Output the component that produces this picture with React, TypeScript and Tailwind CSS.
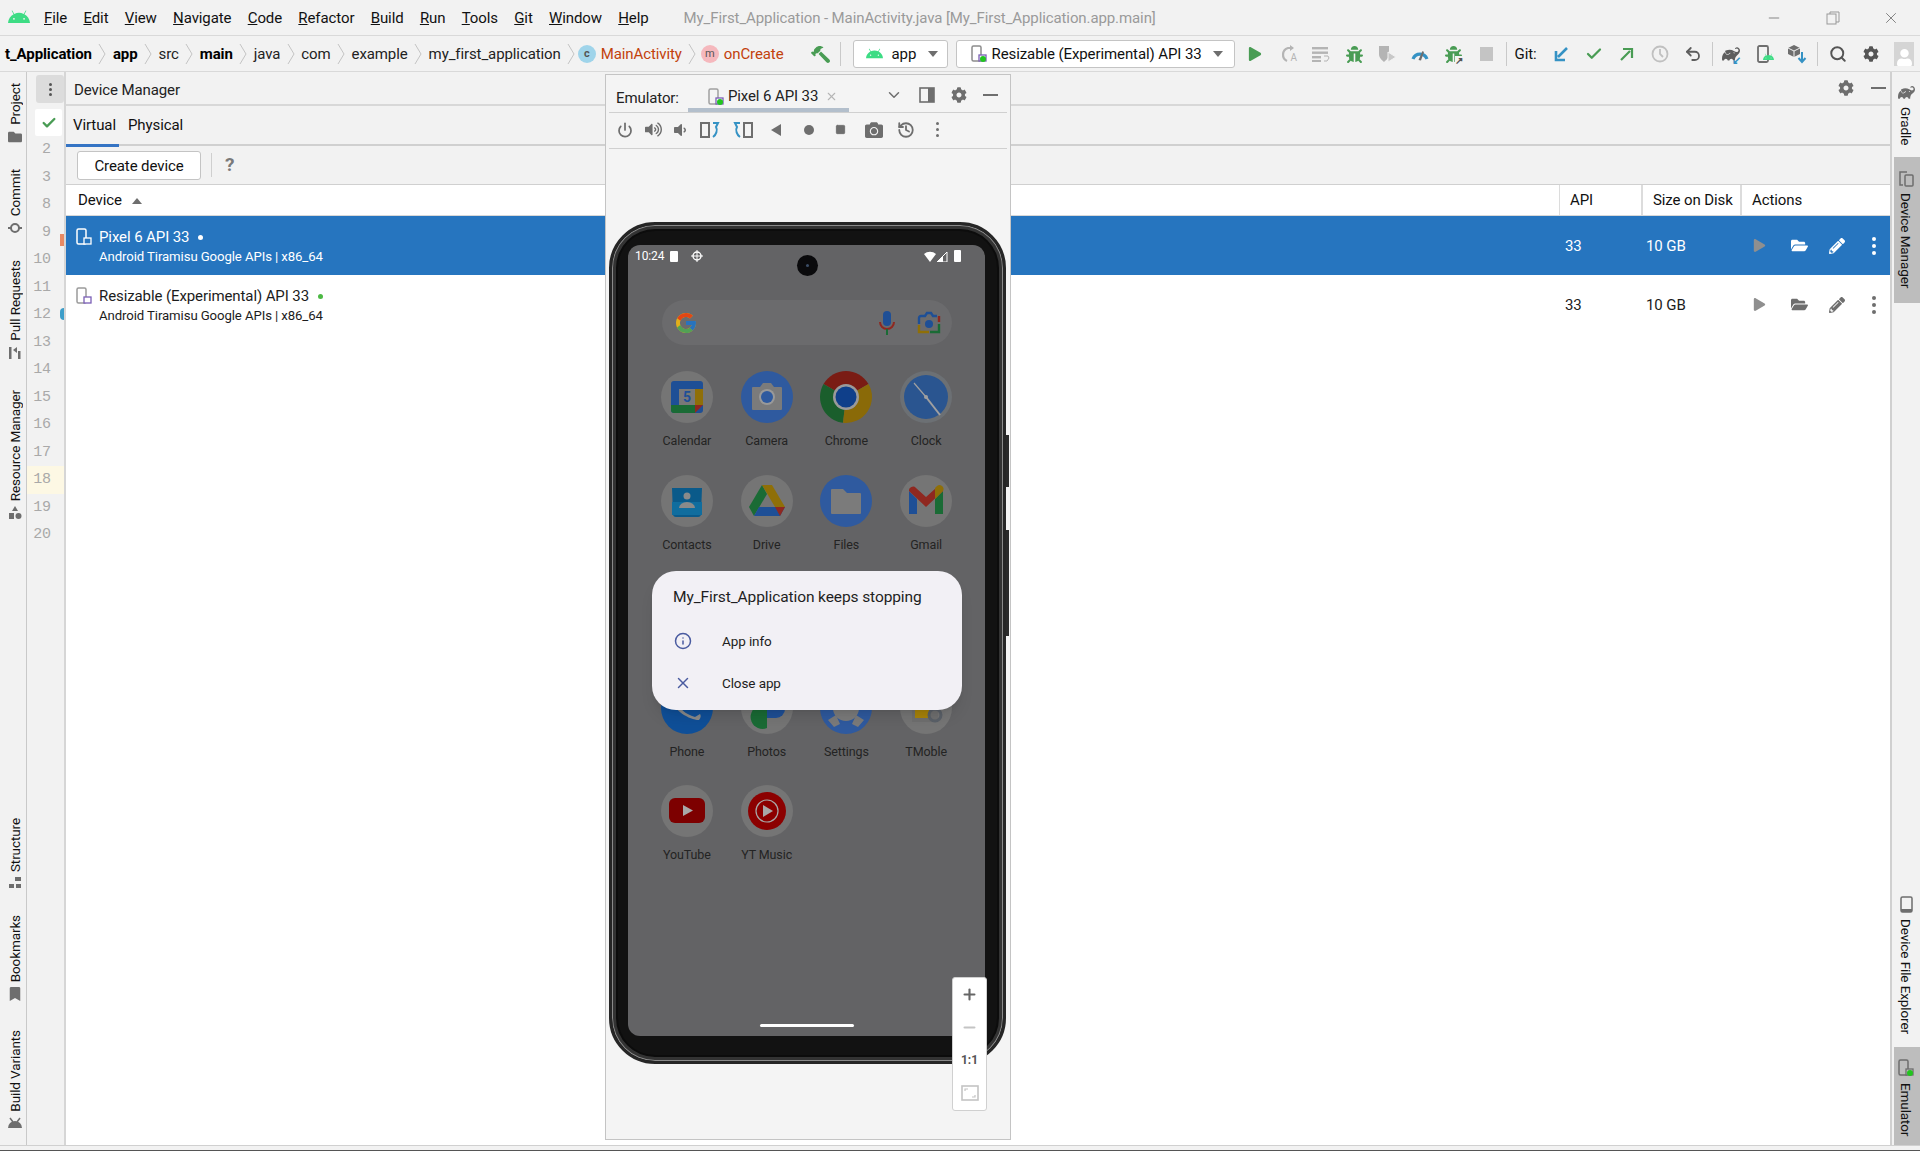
import { Check, ChevronDown, History, Info, Minus, Plus, Power, Search, Square, Undo2, X } from 'lucide-react';
import {
  FaAndroid,
  FaBookmark,
  FaBug,
  FaCamera,
  FaCog,
  FaFolder,
  FaFolderOpen,
  FaHammer,
  FaPencilAlt,
  FaPlay,
  FaUser,
  FaVolumeDown,
  FaVolumeUp,
} from 'react-icons/fa';
import { FcGoogle } from 'react-icons/fc';
import { SiGradle } from 'react-icons/si';
import type { ReactNode } from 'react';

const menus = [
  ['F', 'ile'],
  ['E', 'dit'],
  ['V', 'iew'],
  ['N', 'avigate'],
  ['C', 'ode'],
  ['R', 'efactor'],
  ['B', 'uild'],
  ['R', 'un'],
  ['T', 'ools'],
  ['G', 'it'],
  ['W', 'indow'],
  ['H', 'elp'],
];

const lineNumbers = ['2', '3', '8', '9', '10', '11', '12', '13', '14', '15', '16', '17', '18', '19', '20'];

function Crumb({ label, bold }: { label: string; bold?: boolean }) {
  return (
    <div className="flex items-center">
      <span className={bold ? 'font-bold text-black' : 'text-[#222]'}>{label}</span>
      <CrumbArrow />
    </div>
  );
}

function CrumbArrow() {
  return (
    <svg width="8" height="22" viewBox="0 0 8 22" className="mx-[6.5px] shrink-0">
      <polyline points="1,1 7,11 1,21" fill="none" stroke="#c4c4c4" strokeWidth="1" />
    </svg>
  );
}

function Separator() {
  return <div className="w-px h-[24px] bg-[#c9c9c9] shrink-0" />;
}

function DeviceGlyph({
  accent,
  dot,
  color = '#8c8c8c',
  fill = 'white',
}: {
  accent: string;
  dot?: boolean;
  color?: string;
  fill?: string;
}) {
  return (
    <svg width="16" height="18" viewBox="0 0 16 18" className="shrink-0">
      <rect x="1" y="1" width="9" height="15" rx="1.5" fill="none" stroke={color} strokeWidth="1.5" />
      <rect x="8" y="10" width="7" height="6" fill={fill} stroke={accent} strokeWidth="1.3" />
      {dot && <circle cx="12" cy="14" r="3" fill="#22c41f" />}
    </svg>
  );
}

function Cell({ children }: { children: ReactNode }) {
  return <div className="w-[33px] h-full flex items-center justify-center shrink-0">{children}</div>;
}

function TopToolbarIcons() {
  return (
    <div className="flex items-center h-full">
      <Cell>
        <FaPlay size={14} color="#499c54" />
      </Cell>
      <Cell>
        <div className="relative w-[18px] h-[18px]">
          <svg width="18" height="18" viewBox="0 0 18 18" fill="none">
            <path d="M8 16A7 7 0 0 1 9 3h5" stroke="#b4b4b4" strokeWidth="2.2" />
            <path d="M11 0l4 3-4 3z" fill="#b4b4b4" />
          </svg>
          <span className="absolute right-0 bottom-0 text-[10px] leading-[10px] text-[#b4b4b4]">A</span>
        </div>
      </Cell>
      <Cell>
        <svg width="18" height="16" viewBox="0 0 18 16" fill="#b4b4b4">
          <rect x="0" y="1" width="16" height="2.4" />
          <rect x="0" y="5.5" width="16" height="2.4" />
          <rect x="0" y="10" width="9" height="2.4" />
          <rect x="0" y="14" width="9" height="2" />
          <path d="M12 10h4l1 2-2 3h-3" fill="none" stroke="#b4b4b4" />
        </svg>
      </Cell>
      <Cell>
        <FaBug size={17} color="#499c54" />
      </Cell>
      <Cell>
        <svg width="20" height="20" viewBox="0 0 20 20">
          <path d="M2 2h10v8c0 4-3 6-5 8-2-2-5-4-5-8z" fill="#b4b4b4" />
          <path d="M11 8l8 5-8 5z" fill="#c8c8c8" stroke="#f2f2f2" />
        </svg>
      </Cell>
      <Cell>
        <svg width="18" height="15" viewBox="0 0 18 15">
          <path d="M2 15a7.5 7.5 0 0 1 14 0" fill="none" stroke="#3592c4" strokeWidth="3.2" transform="translate(0 -3)" />
          <path d="M7.5 13l4-9 1.5 1-3 8.5z" fill="#6e6e6e" />
        </svg>
      </Cell>
      <Cell>
        <div className="relative">
          <FaBug size={17} color="#499c54" />
          <div className="absolute -right-[3px] -bottom-[3px] w-[10px] h-[10px] bg-[#f2f2f2] text-[10px] leading-[10px] font-bold text-[#555]">↗</div>
        </div>
      </Cell>
      <Cell>
        <div className="w-[13px] h-[14px] bg-[#c4c4c4]" />
      </Cell>
      <div className="mx-[3px]">
        <Separator />
      </div>
      <span className="ml-[5px] mr-[8px] text-[#111]">Git:</span>
      <Cell>
        <svg width="16" height="16" viewBox="0 0 16 16">
          <path d="M14 2 5 11M3 5v9h9" fill="none" stroke="#3592c4" strokeWidth="2.6" />
        </svg>
      </Cell>
      <Cell>
        <Check size={18} strokeWidth={3} color="#499c54" />
      </Cell>
      <Cell>
        <svg width="16" height="16" viewBox="0 0 16 16">
          <path d="M2 14 11 5M4 3h9v9" fill="none" stroke="#499c54" strokeWidth="2.2" />
        </svg>
      </Cell>
      <Cell>
        <svg width="18" height="18" viewBox="0 0 18 18" fill="none" stroke="#c0c0c0" strokeWidth="1.8">
          <circle cx="9" cy="9" r="7.5" />
          <path d="M9 4v5l3 3" />
        </svg>
      </Cell>
      <Cell>
        <Undo2 size={18} strokeWidth={2.4} color="#5e5e5e" />
      </Cell>
      <div className="mx-[2px]">
        <Separator />
      </div>
      <Cell>
        <div className="relative">
          <SiGradle size={18} color="#5e5e5e" />
          <div className="absolute -right-[1px] -bottom-[3px] text-[11px] leading-[11px] font-bold text-[#3592c4]">↙</div>
        </div>
      </Cell>
      <Cell>
        <div className="relative">
          <svg width="14" height="18" viewBox="0 0 14 18">
            <rect x="1" y="1" width="10" height="16" rx="1.5" fill="none" stroke="#6e6e6e" strokeWidth="1.8" />
          </svg>
          <FaAndroid size={11} color="#3ddc84" className="absolute -right-[3px] bottom-0" />
        </div>
      </Cell>
      <Cell>
        <svg width="20" height="20" viewBox="0 0 20 20">
          <path d="M7 1l6 3v6l-6 3-6-3V4z" fill="#6e6e6e" />
          <path d="M7 7v6M1 4l6 3 6-3" stroke="#f2f2f2" fill="none" />
          <path d="M15 8v9M11.5 14l3.5 4 3.5-4" fill="none" stroke="#3592c4" strokeWidth="2" />
        </svg>
      </Cell>
      <div className="ml-[3px] mr-[4px]">
        <Separator />
      </div>
      <Cell>
        <Search size={18} strokeWidth={2.6} color="#555" />
      </Cell>
      <Cell>
        <FaCog size={16} color="#555" />
      </Cell>
      <Cell>
        <div className="w-[20px] h-[24px] bg-[#d5d5d5] flex items-end justify-center overflow-hidden">
          <FaUser size={17} color="#fff" />
        </div>
      </Cell>
    </div>
  );
}

function SideTab({ label, icon, className = '' }: { label: string; icon: ReactNode; className?: string }) {
  return (
    <div className={`flex flex-col items-center gap-[5px] ${className}`}>
      <span className="[writing-mode:vertical-rl] rotate-180 text-[13.5px] leading-[16px] text-[#111] whitespace-nowrap">{label}</span>
      {icon}
    </div>
  );
}

function RightTab({ label, icon, active, className = '' }: { label: string; icon: ReactNode; active?: boolean; className?: string }) {
  return (
    <div className={`flex flex-col items-center gap-[6px] py-[14px] ${active ? 'bg-[#bdbdbd]' : ''} ${className}`}>
      {icon}
      <span className="[writing-mode:vertical-rl] text-[13.5px] leading-[16px] text-[#111] whitespace-nowrap">{label}</span>
    </div>
  );
}

function LeftStrip() {
  return (
    <div className="w-[27px] shrink-0 border-r border-[#c9c9c9] flex flex-col justify-between pt-[11px] pb-[16px] pl-[3px]">
      <div className="flex flex-col items-center">
        <SideTab label="Project" icon={<FaFolder size={14} color="#6e6e6e" />} />
        <SideTab
          label="Commit"
          className="mt-[25px]"
          icon={
            <svg width="14" height="14" viewBox="0 0 14 14">
              <circle cx="7" cy="7" r="4" fill="none" stroke="#6e6e6e" strokeWidth="2" />
              <path d="M0 7h3M11 7h3" stroke="#6e6e6e" strokeWidth="2" />
            </svg>
          }
        />
        <SideTab
          label="Pull Requests"
          className="mt-[25px]"
          icon={
            <svg width="14" height="14" viewBox="0 0 14 14" fill="#6e6e6e">
              <rect x="1" y="1" width="2.5" height="12" />
              <rect x="10" y="5" width="2.5" height="8" />
              <path d="M9 1v6L5 4z" />
            </svg>
          }
        />
        <SideTab
          label="Resource Manager"
          className="mt-[30px]"
          icon={
            <svg width="14" height="14" viewBox="0 0 14 14" fill="#6e6e6e">
              <path d="M7 0l3 5H4z" />
              <rect x="1" y="7" width="5" height="6" />
              <circle cx="10.5" cy="10" r="3" />
            </svg>
          }
        />
      </div>
      <div className="flex flex-col items-center">
        <SideTab
          label="Structure"
          icon={
            <svg width="14" height="12" viewBox="0 0 14 12" fill="#6e6e6e">
              <rect x="7" y="0" width="6" height="4" />
              <rect x="1" y="7" width="5" height="4" />
              <rect x="8" y="7" width="5" height="4" />
            </svg>
          }
        />
        <SideTab label="Bookmarks" className="mt-[26px]" icon={<FaBookmark size={14} color="#6e6e6e" />} />
        <SideTab
          label="Build Variants"
          className="mt-[29px]"
          icon={
            <svg width="16" height="12" viewBox="0 0 16 12" fill="#6e6e6e">
              <path d="M1 11a7 7 0 0 1 14 0z" />
              <path d="M3 1l3 4M13 1l-3 4" stroke="#6e6e6e" strokeWidth="1.5" />
            </svg>
          }
        />
      </div>
    </div>
  );
}

function Gutter() {
  return (
    <div className="w-[39px] shrink-0 border-r-[2px] border-[#d6d6d6] relative pt-[3px] flex flex-col">
      <div className="ml-[9px] w-[28px] h-[28px] rounded-[3px] bg-[#dcdcdc] flex flex-col items-center justify-center gap-[2px]">
        <div className="w-[3px] h-[3px] rounded-full bg-[#555]" />
        <div className="w-[3px] h-[3px] rounded-full bg-[#555]" />
        <div className="w-[3px] h-[3px] rounded-full bg-[#555]" />
      </div>
      <div className="ml-[8px] mt-[6px] w-[27px] h-[27px] rounded-[2px] bg-white flex items-center justify-center">
        <Check size={16} strokeWidth={3.5} color="#499c54" />
      </div>
      <div className="flex flex-col">
        {lineNumbers.map((n) => (
          <div
            key={n}
            className={`h-[27.5px] leading-[27.5px] pr-[13px] text-right [font-family:'Liberation_Mono',monospace] text-[15px] text-[#a9a9a9] ${
              n === '18' ? 'bg-[#fdf8e4]' : ''
            }`}
          >
            {n}
          </div>
        ))}
      </div>
      <div className="absolute right-0 top-[162px] w-[4px] h-[12px] bg-[#e98a63]" />
      <div className="absolute right-0 top-[236px] w-[4px] h-[12px] rounded-l-full bg-[#3d9ec9]" />
    </div>
  );
}

function DeviceRow({
  name,
  accent,
  selected,
  dot,
}: {
  name: string;
  accent: string;
  selected?: boolean;
  dot: string;
}) {
  const fg = selected ? 'text-white' : 'text-[#1c1c1c]';
  const iconColor = selected ? '#ffffff' : '#6e6e6e';
  const dotClass = selected ? 'bg-white' : 'bg-[#6e6e6e]';
  return (
    <div className={`flex h-[59px] items-center ${selected ? 'bg-[#2675bf]' : 'bg-white'} ${fg}`}>
      <div className="flex-1 flex pl-[10px]">
        <div className="pt-[2px]">
          <DeviceGlyph accent={accent} color={selected ? '#ffffff' : '#9a9a9a'} fill={selected ? '#2675bf' : 'white'} />
        </div>
        <div className="ml-[7px]">
          <div className={`flex items-center h-[22px] text-[15px] ${selected ? 'pt-[2px]' : 'pt-[1px]'}`}>
            {name}
            <div className={`ml-[9px] w-[5px] h-[5px] rounded-full ${dot}`} />
          </div>
          <div className="h-[18px] leading-[18px] text-[13.2px]">Android Tiramisu Google APIs | x86_64</div>
        </div>
      </div>
      <div className="w-[82px] pl-[6px] pt-[1px]">33</div>
      <div className="w-[99px] pl-[5px] pt-[1px]">10 GB</div>
      <div className="w-[150px] flex items-center pl-[13px]">
        <div className="w-[38px]">
          <FaPlay size={13} color="#8f8f8f" />
        </div>
        <div className="w-[38px]">
          <FaFolderOpen size={17} color={iconColor} />
        </div>
        <div className="w-[43px]">
          <FaPencilAlt size={16} color={iconColor} />
        </div>
        <div className="flex flex-col gap-[3px]">
          <div className={`w-[4px] h-[4px] rounded-full ${dotClass}`} />
          <div className={`w-[4px] h-[4px] rounded-full ${dotClass}`} />
          <div className={`w-[4px] h-[4px] rounded-full ${dotClass}`} />
        </div>
      </div>
    </div>
  );
}

function DeviceManager() {
  return (
    <div className="flex-1 flex flex-col min-w-0 border-r-[2px] border-[#d0d0d0]">
      <div className="h-[34px] shrink-0 border-b-[2px] border-[#d8d8d8] flex items-center pl-[8px] pr-[4px]">
        <span className="text-[15px] text-[#222] pt-[5px]">Device Manager</span>
        <div className="ml-auto flex items-center gap-[17px]">
          <FaCog size={16} color="#6e6e6e" />
          <div className="w-[15px] h-[2px] bg-[#6e6e6e]" />
        </div>
      </div>
      <div className="h-[40px] shrink-0 border-b-[2px] border-[#d0d0d0] flex relative">
        <div className="w-[46px] border-b-[3px] border-[#3574c4] pl-[7px] leading-[38px] box-content -mb-[2px] h-[38px] text-[15px] text-[#111]">
          Virtual
        </div>
        <div className="pl-[9px] leading-[38px] text-[15px] text-[#111]">Physical</div>
      </div>
      <div className="h-[39px] shrink-0 border-b-[1px] border-[#d0d0d0] flex items-center pl-[11px]">
        <button className="w-[124px] h-[29px] rounded-[3px] border border-[#c4c4c4] bg-white text-[15px] text-[#111] pt-[2px]">Create device</button>
        <div className="ml-[10px] w-px h-[24px] bg-[#cfcfcf]" />
        <span className="ml-[13px] text-[19px] font-bold text-[#7a7a7a]">?</span>
      </div>
      <div className="h-[31px] shrink-0 flex items-stretch bg-white border-b border-[#d8d8d8] text-[15px] text-[#111]">
        <div className="flex-1 flex items-center pl-[12px] pt-[1px]">
          Device
          <div className="ml-[10px] w-0 h-0 border-x-[5px] border-x-transparent border-b-[6px] border-b-[#6e6e6e]" />
        </div>
        <div className="w-[82px] border-l-[1px] border-[#dcdcdc] flex items-center pl-[10px] pt-[1px]">API</div>
        <div className="w-[99px] border-l-[2px] border-[#dcdcdc] flex items-center pl-[10px] pt-[1px]">Size on Disk</div>
        <div className="w-[150px] border-l-[2px] border-[#dcdcdc] flex items-center pl-[10px] pt-[1px]">Actions</div>
      </div>
      <div className="flex-1 bg-white text-[15px]">
        <DeviceRow name="Pixel 6 API 33" accent="#ffffff" selected dot="bg-white" />
        <DeviceRow name="Resizable (Experimental) API 33" accent="#7a5fb5" dot="bg-[#4cb944]" />
      </div>
    </div>
  );
}

function RightStrip() {
  return (
    <div className="w-[26px] ml-[2px] pr-[2px] shrink-0 flex flex-col">
      <RightTab label="Gradle" className="!py-0 mt-[12px] mb-[12px]" icon={<SiGradle size={17} color="#6e6e6e" />} />
      <RightTab
        label="Device Manager"
        active
        className="h-[146px] -mr-[2px] pr-[2px]"
        icon={
          <svg width="16" height="16" viewBox="0 0 16 16" fill="none" stroke="#6e6e6e" strokeWidth="1.5">
            <path d="M9 1H2v13h3" />
            <rect x="7" y="4" width="8" height="11" rx="1" />
          </svg>
        }
      />
      <div className="mt-auto flex flex-col items-center">
        <RightTab
          label="Device File Explorer"
          className="!py-0 mb-[13px]"
          icon={
            <svg width="13" height="17" viewBox="0 0 13 17">
              <rect x="1" y="1" width="11" height="15" rx="1.5" fill="none" stroke="#6e6e6e" strokeWidth="1.5" />
              <rect x="1" y="13" width="11" height="3" fill="#6e6e6e" />
            </svg>
          }
        />
        <RightTab
          label="Emulator"
          active
          className="w-[26px] -mr-[2px] pr-[2px] h-[98px] !pt-[12px]"
          icon={<DeviceGlyph accent="#6e6e6e" dot color="#6e6e6e" fill="#bdbdbd" />}
        />
      </div>
    </div>
  );
}

function AppIcon({ children }: { children: ReactNode }) {
  return (
    <svg width="52" height="52" viewBox="0 0 52 52">
      {children}
    </svg>
  );
}

const plate = <circle cx="26" cy="26" r="26" fill="#757575" />;

const apps: { label: string; icon: ReactNode }[] = [
  {
    label: 'Calendar',
    icon: (
      <AppIcon>
        {plate}
        <rect x="10" y="10" width="32" height="32" rx="3" fill="#1e4f96" />
        <rect x="34" y="18" width="8" height="16" fill="#8f6f08" />
        <path d="M10 34h24v8H13a3 3 0 0 1-3-3z" fill="#1a6b35" />
        <path d="M34 34h8l-8 8z" fill="#8f2820" />
        <rect x="18" y="18" width="16" height="16" fill="#787878" />
        <text x="26" y="31" textAnchor="middle" fontSize="14" fontWeight="700" fill="#1e4f96" fontFamily="Roboto, sans-serif">5</text>
      </AppIcon>
    ),
  },
  {
    label: 'Camera',
    icon: (
      <AppIcon>
        <circle cx="26" cy="26" r="26" fill="#2f5a9f" />
        <path d="M12 16h7l3-4h8l3 4h7a1 1 0 0 1 1 1v21a1 1 0 0 1-1 1H12a1 1 0 0 1-1-1V17a1 1 0 0 1 1-1z" fill="#7b7b7b" />
        <circle cx="26" cy="26" r="8" fill="#999" />
        <circle cx="26" cy="26" r="6" fill="#2f5a9f" />
      </AppIcon>
    ),
  },
  {
    label: 'Chrome',
    icon: (
      <AppIcon>
        <path d="M3.5 13A26 26 0 0 1 48.5 13L26 26Z" fill="#7a1c14" />
        <path d="M3.5 13A26 26 0 0 0 23 51.8L26 26Z" fill="#1a5e2c" />
        <path d="M48.5 13A26 26 0 0 1 23 51.8L26 26Z" fill="#8a6a08" />
        <circle cx="26" cy="26" r="13" fill="#9a9a9a" />
        <circle cx="26" cy="26" r="10.5" fill="#0f3f8a" />
      </AppIcon>
    ),
  },
  {
    label: 'Clock',
    icon: (
      <AppIcon>
        <circle cx="26" cy="26" r="26" fill="#6c7074" />
        <circle cx="26" cy="26" r="22" fill="#2a5590" />
        <path d="M14 12 26 26" stroke="#a0a0a0" strokeWidth="1.2" fill="none" />
        <path d="M26 26 40 44" stroke="#a0a0a0" strokeWidth="2" fill="none" />
        <circle cx="26" cy="26" r="2" fill="#a0a0a0" />
      </AppIcon>
    ),
  },
  {
    label: 'Contacts',
    icon: (
      <AppIcon>
        {plate}
        <path d="M11 13h30l-1 27a3 3 0 0 1-3 2H15a3 3 0 0 1-3-2z" fill="#0a5a8a" />
        <rect x="11" y="27" width="30" height="13" fill="#106d9e" />
        <circle cx="26" cy="21" r="3.5" fill="#8a8a8a" />
        <path d="M18 33a8 6 0 0 1 16 0z" fill="#8a8a8a" />
      </AppIcon>
    ),
  },
  {
    label: 'Drive',
    icon: (
      <AppIcon>
        {plate}
        <path d="M21 10 8 32l5 9 13-22z" fill="#1a6b35" />
        <path d="M21 10h10l13 22H34z" fill="#8f6f08" />
        <path d="M13 41h26l5-9H18z" fill="#1e4f96" />
        <path d="M34 32h10l-5 9z" fill="#8f2820" />
      </AppIcon>
    ),
  },
  {
    label: 'Files',
    icon: (
      <AppIcon>
        <circle cx="26" cy="26" r="26" fill="#2f5a9f" />
        <path d="M12 14h11l4 4h13a1 1 0 0 1 1 1v19a1 1 0 0 1-1 1H12a1 1 0 0 1-1-1V15a1 1 0 0 1 1-1z" fill="#7b7b7b" />
      </AppIcon>
    ),
  },
  {
    label: 'Gmail',
    icon: (
      <AppIcon>
        {plate}
        <path d="M9 16v23h8V24z" fill="#1e4f96" />
        <path d="M35 24v15h8V16z" fill="#1a6b35" />
        <path d="M9 16a4 4 0 0 1 7-3l10 9 10-9a4 4 0 0 1 7 3l-17 16z" fill="#8f2820" />
        <path d="M37 11a4 4 0 0 1 6 5l-8 8v-11z" fill="#8f6f08" />
      </AppIcon>
    ),
  },
];

const lowerApps: { label: string; icon: ReactNode }[] = [
  {
    label: 'Phone',
    icon: (
      <AppIcon>
        <circle cx="26" cy="26" r="26" fill="#0f4f98" />
        <path d="M16 18c2 9 8 14 18 17l5-3c1 1 1 4-1 6-10 0-25-10-27-19z" fill="#8a8a8a" />
      </AppIcon>
    ),
  },
  {
    label: 'Photos',
    icon: (
      <AppIcon>
        {plate}
        <path d="M26 24h-9a9 9 0 0 0 9 22z" fill="#1a6b35" />
        <path d="M26 24v12h9a9 9 0 0 0 0-18z" fill="#1e4f96" />
      </AppIcon>
    ),
  },
  {
    label: 'Settings',
    icon: (
      <AppIcon>
        <circle cx="26" cy="26" r="26" fill="#2f5a9f" />
        <circle cx="26" cy="26" r="13" fill="#7b7b7b" />
        <circle cx="26" cy="22" r="5" fill="#2f5a9f" />
        <path d="M8 38l8-5 4 9-6 3zM44 38l-8-5-4 9 6 3z" fill="#7b7b7b" />
      </AppIcon>
    ),
  },
  {
    label: 'TMoble',
    icon: (
      <AppIcon>
        {plate}
        <rect x="12" y="24" width="26" height="16" fill="#6f6f6f" />
        <rect x="15" y="24" width="14" height="12" fill="#a8830a" />
        <circle cx="35" cy="33" r="6" fill="none" stroke="#5a6068" strokeWidth="3" />
      </AppIcon>
    ),
  },
  {
    label: 'YouTube',
    icon: (
      <AppIcon>
        {plate}
        <rect x="8" y="13" width="36" height="25" rx="6" fill="#7d0000" />
        <path d="M22 20l10 5.5-10 5.5z" fill="#a8a8a8" />
      </AppIcon>
    ),
  },
  {
    label: 'YT Music',
    icon: (
      <AppIcon>
        {plate}
        <circle cx="26" cy="26" r="19" fill="#8c0000" />
        <circle cx="26" cy="26" r="11" fill="none" stroke="#a8a8a8" strokeWidth="1.2" />
        <path d="M22 20l10 6-10 6z" fill="#a8a8a8" />
      </AppIcon>
    ),
  },
];

function AppTile({ label, icon }: { label: string; icon: ReactNode }) {
  return (
    <div className="h-[103.5px] flex flex-col items-center">
      {icon}
      <div className="mt-[10px] text-[12.5px] leading-[16px] text-[#232323]">{label}</div>
    </div>
  );
}

function CrashDialog() {
  return (
    <div className="absolute left-[24px] top-[326px] w-[310px] h-[139px] rounded-[24px] bg-[#f2f0f5] pl-[22px] pt-[16px] text-[#1e1e22] shadow-lg">
      <div className="-ml-[1px] text-[15.5px] leading-[20px]">My_First_Application keeps stopping</div>
      <div className="mt-[23px] flex items-center h-[22px]">
        <Info size={18} color="#4a5ba0" className="shrink-0" />
        <span className="ml-[30px] text-[13.5px]">App info</span>
      </div>
      <div className="mt-[20px] flex items-center h-[22px]">
        <X size={18} color="#4a5ba0" className="shrink-0" />
        <span className="ml-[30px] text-[13.5px]">Close app</span>
      </div>
    </div>
  );
}

function PhoneScreen() {
  return (
    <div className="relative h-full rounded-[12px] bg-[#636365] flex flex-col overflow-hidden">
      <div className="h-[22px] shrink-0 flex items-center pl-[7px] pr-[23px] text-[12px] text-white">
        <span>10:24</span>
        <div className="ml-[6px] w-[8px] h-[11px] rounded-[1px] bg-white" />
        <svg width="12" height="12" viewBox="0 0 12 12" className="ml-[13px]">
          <circle cx="6" cy="6" r="4" fill="none" stroke="#fff" strokeWidth="1.4" />
          <path d="M6 0v12M0 6h12" stroke="#fff" strokeWidth="1" />
        </svg>
        <div className="ml-auto flex items-center gap-[1px] mr-[1px]">
          <svg width="12" height="11" viewBox="0 0 12 11">
            <path d="M0 3a9 9 0 0 1 12 0L6 11z" fill="#fff" />
          </svg>
          <svg width="11" height="11" viewBox="0 0 11 11">
            <path d="M10 1v10H0z" fill="none" stroke="#fff" />
            <path d="M6 5v6H0z" fill="#fff" />
          </svg>
          <div className="ml-[5px] w-[7px] h-[12px] rounded-[1px] bg-white" />
        </div>
      </div>
      <div className="absolute left-[169px] top-[10px] w-[21px] h-[21px] rounded-full bg-[#0a0a0c] flex items-center justify-center">
        <div className="w-[3px] h-[3px] rounded-full bg-[#3b4d66]" />
      </div>
      <div className="mt-[33px] ml-[34px] mr-[33px] h-[45px] shrink-0 rounded-full bg-[#6b6b6d] flex items-center pl-[12px] pr-[11px]">
        <FcGoogle size={24} className="opacity-80" />
        <svg width="18" height="26" viewBox="0 0 18 26" className="ml-auto" fill="none">
          <rect x="5" y="1" width="8" height="15" rx="4" fill="#1e4f96" />
          <path d="M2 12a7 7 0 0 0 14 0" stroke="#8f2820" strokeWidth="2" />
          <path d="M9 19v6" stroke="#1a6b35" strokeWidth="2" />
        </svg>
        <svg width="24" height="24" viewBox="0 0 24 24" className="ml-[21px]" fill="none">
          <path d="M2 13V7a2 2 0 0 1 2-2h4l2-3h4l2 3h4" stroke="#1e4f96" strokeWidth="2.4" />
          <path d="M22 5v6" stroke="#8f2820" strokeWidth="2.4" />
          <path d="M22 13v8h-9" stroke="#1a6b35" strokeWidth="2.4" />
          <path d="M2 14v7h10" stroke="#8f6f08" strokeWidth="2.4" />
          <circle cx="12" cy="13" r="4" fill="#1e4f96" />
        </svg>
      </div>
      <div className="mt-[26px] px-[19px] grid grid-cols-4">
        {apps.map((a) => (
          <AppTile key={a.label} label={a.label} icon={a.icon} />
        ))}
        <div className="col-span-4 h-[103.5px]" />
        {lowerApps.map((a) => (
          <AppTile key={a.label} label={a.label} icon={a.icon} />
        ))}
      </div>
      <div className="mt-auto mb-[9px] self-center w-[94px] h-[3px] rounded-full bg-white" />
      <CrashDialog />
    </div>
  );
}

function Phone() {
  return (
    <div className="relative ml-[3px] mt-[73px] w-[397px] h-[842px] rounded-[46px] bg-[#121212] border-[3px] border-[#262626] pl-[16px] pr-[18px] pt-[20px] pb-[25px] shadow-[inset_0_0_0_1px_#8a8a8a,inset_0_0_0_4px_#333,inset_0_0_0_6px_#0c0c0c]">
      <PhoneScreen />
      <div className="absolute -right-[6px] top-[210px] w-[3px] h-[52px] bg-[#2a2a2a]" />
      <div className="absolute -right-[6px] top-[305px] w-[3px] h-[106px] bg-[#2a2a2a]" />
    </div>
  );
}

function EmulatorWindow() {
  return (
    <div className="absolute left-[605px] top-[74px] w-[406px] h-[1066px] bg-[#f4f4f4] border border-[#c4c4c4] flex flex-col">
      <div className="h-[38px] shrink-0 mx-[3px] border-b border-[#d0d0d0] flex items-end text-[15px] text-[#222]">
        <span className="ml-[7px] mb-[3px]">Emulator:</span>
        <div className="ml-[9px] w-[161px] h-[34px] border-b-[4px] border-[#b3bfcc] flex items-center pl-[20px] pt-[7px]">
          <DeviceGlyph accent="#7a5fb5" dot color="#a0a0a0" />
          <span className="ml-[4px]">Pixel 6 API 33</span>
          <X size={13} color="#b5b5b5" className="ml-[7px]" />
        </div>
        <div className="ml-auto mb-[8px] mr-[9px] flex items-center gap-[16px]">
          <ChevronDown size={18} color="#6e6e6e" />
          <svg width="16" height="16" viewBox="0 0 16 16">
            <rect x="1" y="1" width="14" height="14" fill="none" stroke="#6e6e6e" strokeWidth="1.6" />
            <rect x="9" y="1" width="6" height="14" fill="#6e6e6e" />
            <rect x="3" y="3" width="6" height="10" fill="#f4f4f4" />
          </svg>
          <FaCog size={16} color="#6e6e6e" />
          <div className="w-[15px] h-[2px] bg-[#6e6e6e]" />
        </div>
      </div>
      <div className="h-[36px] shrink-0 mx-[3px] border-b border-[#d0d0d0] flex items-center pl-[8px] pb-[2px]">
        <div className="w-[28px]">
          <Power size={16} strokeWidth={2.6} color="#6e6e6e" />
        </div>
        <div className="w-[27px]">
          <FaVolumeUp size={17} color="#6e6e6e" />
        </div>
        <div className="w-[28px]">
          <FaVolumeDown size={16} color="#6e6e6e" />
        </div>
        <div className="w-[33px]">
          <svg width="20" height="18" viewBox="0 0 20 18" fill="none">
            <rect x="1" y="2" width="8" height="14" stroke="#6e6e6e" strokeWidth="2" />
            <path d="M13 2h5l-2 4c2 3 0 8-3 10" stroke="#3592c4" strokeWidth="2" />
          </svg>
        </div>
        <div className="w-[37px]">
          <svg width="20" height="18" viewBox="0 0 20 18" fill="none">
            <rect x="11" y="2" width="8" height="14" stroke="#6e6e6e" strokeWidth="2" />
            <path d="M7 2H2l2 4c-2 3 0 8 3 10" stroke="#3592c4" strokeWidth="2" />
          </svg>
        </div>
        <div className="w-[33px] pl-[1px]">
          <div className="w-0 h-0 border-y-[6px] border-y-transparent border-r-[10px] border-r-[#6e6e6e]" />
        </div>
        <div className="w-[32px] pl-[1px]">
          <div className="w-[10px] h-[10px] rounded-full bg-[#6e6e6e]" />
        </div>
        <div className="w-[30px]">
          <Square size={11} fill="#6e6e6e" color="#6e6e6e" />
        </div>
        <div className="w-[32px]">
          <FaCamera size={18} color="#6e6e6e" />
        </div>
        <div className="w-[33px]">
          <History size={18} strokeWidth={2.4} color="#6e6e6e" />
        </div>
        <div className="flex flex-col gap-[3px] pl-[6px]">
          <div className="w-[3px] h-[3px] rounded-full bg-[#6e6e6e]" />
          <div className="w-[3px] h-[3px] rounded-full bg-[#6e6e6e]" />
          <div className="w-[3px] h-[3px] rounded-full bg-[#6e6e6e]" />
        </div>
      </div>
      <Phone />
      <div className="absolute left-[346px] top-[902px] w-[35px] h-[134px] bg-white border border-[#d0d0d0] rounded-[3px] flex flex-col items-center justify-between pt-[8px] pb-[9px]">
        <Plus size={17} strokeWidth={3} color="#666" />
        <Minus size={17} strokeWidth={3} color="#c4c4c4" />
        <span className="text-[12px] font-bold text-[#555]">1:1</span>
        <svg width="18" height="16" viewBox="0 0 18 16" fill="none" stroke="#c4c4c4">
          <rect x="1" y="1" width="16" height="14" strokeWidth="1.6" />
          <path d="M4 6V4h3M14 10v2h-3" strokeWidth="1.2" />
        </svg>
      </div>
    </div>
  );
}

export default function App() {
  return (
    <div className="relative w-[1920px] h-[1151px] overflow-hidden flex flex-col bg-[#f2f2f2] text-[15px] [font-family:Roboto,sans-serif] tracking-[-0.1px]">
      <div className="h-[36px] shrink-0 border-b-[1px] border-[#d9d9d9] flex items-center pt-[1px]">
        <FaAndroid size={22} color="#3ddc84" className="ml-[8px] mr-[14px]" />
        <div className="flex items-center gap-[16.3px] text-[#111]">
          {menus.map(([first, rest], i) => (
            <span key={i}>
              <span className="underline">{first}</span>
              {rest}
            </span>
          ))}
        </div>
        <span className="ml-[35px] pt-[1px] text-[#9a9a9a]">My_First_Application - MainActivity.java [My_First_Application.app.main]</span>
        <div className="ml-auto flex items-center">
          <Minus size={16} color="#aaa" className="mr-[44px]" />
          <svg width="14" height="14" viewBox="0 0 14 14" fill="none" stroke="#999" className="mr-[42px]">
            <rect x="1" y="3" width="9" height="10" />
            <path d="M4 3V1h9v10h-3" />
          </svg>
          <X size={18} strokeWidth={1.2} color="#777" className="mr-[20px]" />
        </div>
      </div>
      <div className="h-[36px] shrink-0 border-b-[1px] border-[#d9d9d9] flex items-center pt-[1px]">
        <div className="ml-[5px]">
          <Crumb label="t_Application" bold />
        </div>
        <Crumb label="app" bold />
        <Crumb label="src" />
        <Crumb label="main" bold />
        <Crumb label="java" />
        <Crumb label="com" />
        <Crumb label="example" />
        <Crumb label="my_first_application" />
        <div className="-ml-[4px] w-[18px] h-[18px] rounded-full bg-[#9fd4ea] flex items-center justify-center text-[11px] font-bold text-[#555] shrink-0">c</div>
        <span className="ml-[5px] text-[#c2410c]">MainActivity</span>
        <CrumbArrow />
        <div className="-ml-[2px] w-[18px] h-[18px] rounded-full bg-[#f5b8bd] flex items-center justify-center text-[11px] text-[#555] shrink-0">m</div>
        <span className="ml-[5px] text-[#c2410c]">onCreate</span>
        <FaHammer size={19} color="#499c54" className="ml-[27px] shrink-0 -scale-x-100" />
        <div className="ml-[10px]">
          <Separator />
        </div>
        <div className="ml-[12px] w-[95px] h-[28px] shrink-0 rounded-[3px] border border-[#c4c4c4] bg-white flex items-center pl-[12px]">
          <FaAndroid size={17} color="#3ddc84" />
          <span className="ml-[9px] text-[#111]">app</span>
          <div className="ml-auto mr-[9px] w-0 h-0 border-x-[5px] border-x-transparent border-t-[6px] border-t-[#6e6e6e]" />
        </div>
        <div className="ml-[8px] w-[279px] h-[28px] shrink-0 rounded-[3px] border border-[#c4c4c4] bg-white flex items-center pl-[14px]">
          <DeviceGlyph accent="#7a5fb5" dot />
          <span className="ml-[5px] text-[#111] whitespace-nowrap">Resizable (Experimental) API 33</span>
          <div className="ml-auto mr-[11px] w-0 h-0 border-x-[5px] border-x-transparent border-t-[6px] border-t-[#6e6e6e]" />
        </div>
        <div className="ml-[4px] h-full">
          <TopToolbarIcons />
        </div>
      </div>
      <div className="flex-1 flex min-h-0">
        <LeftStrip />
        <Gutter />
        <DeviceManager />
        <RightStrip />
      </div>
      <div className="h-[6px] shrink-0 border-t border-[#d0d0d0] border-b border-b-[#555] bg-[#f2f2f2]" />
      <EmulatorWindow />
    </div>
  );
}
